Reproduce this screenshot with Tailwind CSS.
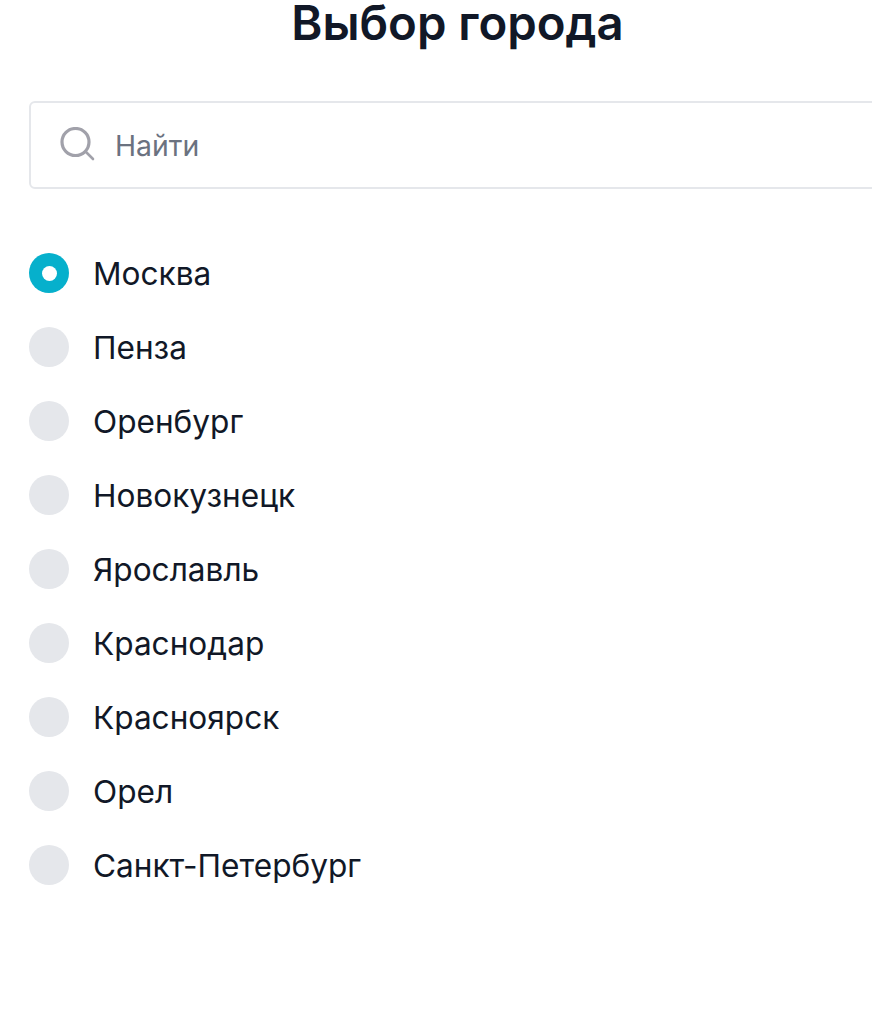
<!doctype html>
<html lang="ru">
<head>
<meta charset="utf-8">
<script src="https://cdn.jsdelivr.net/npm/@tailwindcss/browser@4"></script>
</head>
<body class="bg-white overflow-hidden font-['Inter',sans-serif] text-[#111827]">
<div class="h-[1011px] w-[872px] overflow-hidden pl-[29px]">
  <h1 class="ml-[-29px] h-[51px] w-[915px] text-center text-[47.3px] leading-[46px] font-semibold">Выбор города</h1>
  <div class="mt-[50px] flex h-[88px] w-[900px] items-center rounded-[6px] border-2 border-[#e5e7eb] pl-[28px]">
    <svg class="h-[36px] w-[36px] text-[#a1a1aa]" viewBox="0 0 36 36" fill="none" stroke="currentColor" stroke-linecap="round"><circle cx="16.5" cy="15" r="13.5" stroke-width="3.2"/><path d="M27 25l7 7" stroke-width="2.6"/></svg>
    <span class="relative top-[1px] ml-[20px] text-[28.4px] text-[#6b7280]">Найти</span>
  </div>
  <ul class="mt-[64px] flex flex-col gap-[34px] text-[31.6px] leading-[40px]">
    <li class="flex items-center gap-[24px]"><span class="flex h-[40px] w-[40px] items-center justify-center rounded-full bg-[#06b0cc]"><span class="h-[15px] w-[15px] rounded-full bg-white"></span></span><span class="relative top-[1px]">Москва</span></li>
    <li class="flex items-center gap-[24px]"><span class="h-[40px] w-[40px] rounded-full bg-[#e5e7eb]"></span><span class="relative top-[1px]">Пенза</span></li>
    <li class="flex items-center gap-[24px]"><span class="h-[40px] w-[40px] rounded-full bg-[#e5e7eb]"></span><span class="relative top-[1px]">Оренбург</span></li>
    <li class="flex items-center gap-[24px]"><span class="h-[40px] w-[40px] rounded-full bg-[#e5e7eb]"></span><span class="relative top-[1px]">Новокузнецк</span></li>
    <li class="flex items-center gap-[24px]"><span class="h-[40px] w-[40px] rounded-full bg-[#e5e7eb]"></span><span class="relative top-[1px]">Ярославль</span></li>
    <li class="flex items-center gap-[24px]"><span class="h-[40px] w-[40px] rounded-full bg-[#e5e7eb]"></span><span class="relative top-[1px]">Краснодар</span></li>
    <li class="flex items-center gap-[24px]"><span class="h-[40px] w-[40px] rounded-full bg-[#e5e7eb]"></span><span class="relative top-[1px]">Красноярск</span></li>
    <li class="flex items-center gap-[24px]"><span class="h-[40px] w-[40px] rounded-full bg-[#e5e7eb]"></span><span class="relative top-[1px]">Орел</span></li>
    <li class="flex items-center gap-[24px]"><span class="h-[40px] w-[40px] rounded-full bg-[#e5e7eb]"></span><span class="relative top-[1px]">Санкт-Петербург</span></li>
  </ul>
</div>
</body>
</html>
